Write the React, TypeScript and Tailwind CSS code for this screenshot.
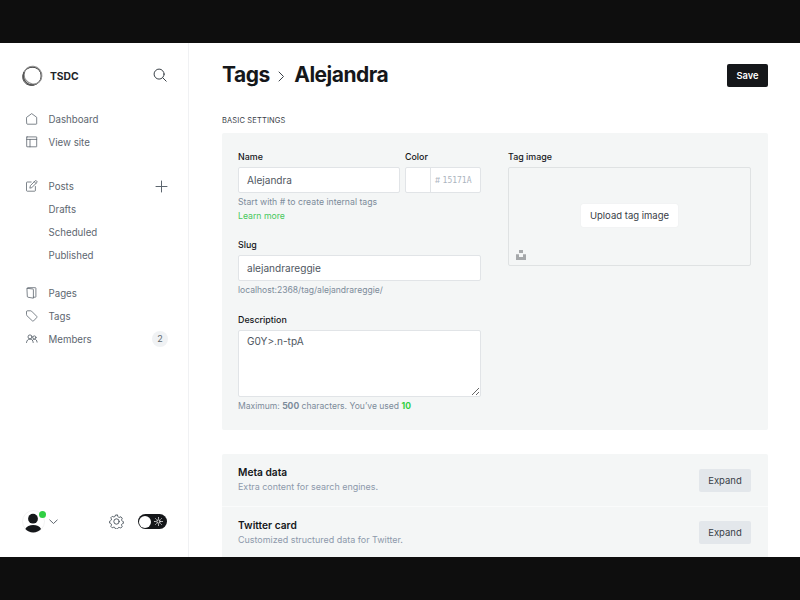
import type { ReactNode } from "react";

const line = {
  fill: "none",
  stroke: "currentColor",
  strokeLinecap: "round" as const,
  strokeLinejoin: "round" as const,
};

function Logo() {
  return (
    <svg width="22" height="22" viewBox="0 0 22 22" fill="none" stroke="#444" className="mt-px shrink-0">
      <circle cx="11.300" cy="11" r="9" strokeWidth="1" />
      <ellipse cx="11" cy="11.300" rx="9.600" ry="9" strokeWidth="0.8" transform="rotate(-35 11 11.3)" />
      <ellipse cx="12" cy="10.200" rx="9.200" ry="8.600" strokeWidth="1.100" stroke="#909090" transform="rotate(50 12 10.2)" />
      <path d="M3.300 7A9 9 0 0 0 13 19.700" strokeWidth="1.100" stroke="#555" />
    </svg>
  );
}

function SearchIcon() {
  return (
    <svg width="14" height="14" viewBox="0 0 14 14" {...line} strokeWidth="1" className="text-[#394047]">
      <circle cx="6.1" cy="6.1" r="5" />
      <path d="M9.8 9.8l3.4 3.4" />
    </svg>
  );
}

function HomeIcon() {
  return (
    <svg width="12" height="12" viewBox="0 0 12 12" {...line} strokeWidth="0.8">
      <path d="M.7 4.300L5.700.6l5 3.700V10.600a.6.6 0 0 1-.6.6H1.300a.6.6 0 0 1-.6-.6z" />
    </svg>
  );
}

function LayoutIcon() {
  return (
    <svg width="12" height="12" viewBox="0 0 12 12" {...line} strokeWidth="0.8">
      <rect x="0.700" y="0.900" width="10" height="9.900" rx=".3" />
      <path d="M.7 3.400h10M4 3.400v7.400" />
    </svg>
  );
}

function EditIcon() {
  return (
    <svg width="12" height="12" viewBox="0 0 12 12" {...line} strokeWidth="0.8">
      <path d="M5.200 2H1.200a.7.700 0 0 0-.7.700v7.800c0 .4.300.7.700.7h7.500c.4 0 .7-.3.700-.7V6.500" />
      <path d="M3.900 7.800l.5-2.200L9.100.9c.4-.4 1-.4 1.400 0l.3.300c.4.400.4 1 0 1.400L6.100 7.300zM8.300 1.800l1.600 1.600" />
    </svg>
  );
}

function PagesIcon() {
  return (
    <svg width="12" height="12" viewBox="0 0 12 12" {...line} strokeWidth="0.8">
      <path d="M1.300 1.300l5.600.700c.3 0 .5.300.5.600v8.600L1.900 10.200a.6.6 0 0 1-.6-.6z" />
      <path d="M1.300 1.300c0-.4.200-.6.600-.6h7.500c.3 0 .5.200.5.500v8.500c0 .3-.2.500-.5.500h-2" />
    </svg>
  );
}

function TagIcon() {
  return (
    <svg width="12" height="12" viewBox="0 0 12 12" {...line} strokeWidth="0.8">
      <path d="M.5 1.500c0-.4.300-.7.700-.7h3.600c.3 0 .5.100.7.300l5.200 5.200c.4.400.4.900 0 1.300L7.600 10.900c-.4.300-.9.300-1.200 0L.8 5.600a1 1 0 0 1-.3-.7z" />
    </svg>
  );
}

function MembersIcon() {
  return (
    <svg width="12" height="12" viewBox="0 0 12 12" {...line} strokeWidth="0.9">
      <circle cx="4" cy="3.900" r="2" />
      <path d="M.5 9.500C.7 7.300 2.100 6.100 4 6.100S7 7.300 7.200 9.500" />
      <circle cx="8.400" cy="4.500" r="1.600" />
      <path d="M6.900 6.800c.4-.4.900-.6 1.500-.6 1.600 0 2.500 1.100 2.700 2.900" />
    </svg>
  );
}

function GearIcon() {
  return (
    <svg width="15" height="15" viewBox="0 0 24 24" {...line} strokeWidth="1.500" className="text-[#4c555e]">
      <circle cx="12" cy="12" r="4.300" />
      <path d="M13.700 2.200l.6 1.800a2.200 2.200 0 0 0 3 1.200l1.700-.8 2.200 2.400-.8 1.700a2.200 2.200 0 0 0 1.200 3l1.300.6v3l-1.400.4a2.200 2.200 0 0 0-1.200 3l.8 1.700-2.300 2.300-1.700-.8a2.200 2.200 0 0 0-3 1.200l-.5 1.100h-3.200L9.800 22.500a2.200 2.200 0 0 0-3-1.200l-1.600.8-2.300-2.300.8-1.700a2.200 2.200 0 0 0-1.200-3L1 14.500v-3l1.500-.8a2.200 2.200 0 0 0 1.200-3L2.900 6l2.300-2.300 1.600.8a2.200 2.200 0 0 0 3-1.200l.6-1.700h2.800z" />
    </svg>
  );
}

function SunIcon() {
  return (
    <svg width="9" height="9" viewBox="0 0 9 9" {...line} strokeWidth="0.9" className="text-white">
      <circle cx="4.500" cy="4.500" r="1.700" />
      <path d="M4.500.6v.7M4.500 7.700v.7M.6 4.500h.7M7.700 4.500h.7M1.700 1.700l.5.500M6.800 6.800l.5.500M7.300 1.700l-.5.500M2.200 6.800l-.5.500" />
    </svg>
  );
}

function NavRow({ icon, label, end }: { icon?: ReactNode; label: string; end?: ReactNode }) {
  return (
    <a className="flex h-[23px] items-center pl-[26px] pr-5 text-[#5d666f]">
      <span className="flex w-[22.5px] shrink-0 pt-px">{icon}</span>
      <span className="flex-1 pt-[2px] text-[9.700px] leading-none">{label}</span>
      {end}
    </a>
  );
}

function Sidebar() {
  return (
    <nav className="flex w-[189px] shrink-0 flex-col border-r border-[#f0f1f3]">
      <div className="flex h-16 items-center pl-[21px] pr-[21px]">
        <Logo />
        <span className="ml-[7px] flex-1 pt-[3px] text-[10.300px] font-bold leading-none text-[#222529]">TSDC</span>
        <SearchIcon />
      </div>
      <div>
        <NavRow icon={<HomeIcon />} label="Dashboard" />
        <NavRow icon={<LayoutIcon />} label="View site" />
      </div>
      <div className="mt-[21px]">
        <NavRow
          icon={<EditIcon />}
          label="Posts"
          end={
            <svg width="13" height="13" viewBox="0 0 13 13" {...line} strokeWidth="1" className="mt-px">
              <path d="M6.500 1v11M1 6.500h11" />
            </svg>
          }
        />
        <NavRow label="Drafts" />
        <NavRow label="Scheduled" />
        <NavRow label="Published" />
      </div>
      <div className="mt-[15px]">
        <NavRow icon={<PagesIcon />} label="Pages" />
        <NavRow icon={<TagIcon />} label="Tags" />
        <NavRow
          icon={<MembersIcon />}
          label="Members"
          end={
            <span className="flex size-4 items-center justify-center rounded-full bg-[#f0f2f4] text-[9px] leading-none text-[#5d666f]">
              2
            </span>
          }
        />
      </div>
      <div className="mt-auto flex h-[71px] items-center pl-[22px] pr-[21.500px]">
        <span className="relative flex">
          <svg width="23" height="23" viewBox="0 0 23 23">
            <circle cx="11.500" cy="11.500" r="11" fill="#fff" stroke="#ececec" strokeWidth="0.7" />
            <circle cx="11" cy="8.700" r="4.900" fill="#15171a" />
            <path d="M3.300 19.100c1.200-2.600 4.300-4 7.900-4s6.700 1.400 7.900 4A11.300 11.300 0 0 1 11.200 22.600 11.300 11.300 0 0 1 3.300 19.100z" fill="#15171a" />
          </svg>
          <span className="absolute top-[0.5px] left-[16.500px] size-[7px] rounded-full bg-[#30cf43]" />
        </span>
        <svg width="9" height="6" viewBox="0 0 9 6" {...line} strokeWidth="0.9" className="ml-[4px] text-[#4c555e]">
          <path d="M.8 1l3.700 3.500L8.200 1" />
        </svg>
        <span className="ml-auto">
          <GearIcon />
        </span>
        <span className="ml-[14px] flex h-[15.500px] w-[28.500px] items-center justify-between rounded-full bg-[#15171a] pl-px pr-[4px]">
          <span className="size-3 rounded-full bg-white" />
          <SunIcon />
        </span>
      </div>
    </nav>
  );
}

function Label({ children }: { children: ReactNode }) {
  return <div className="h-[17px] text-[8.900px] font-medium leading-[14px] text-[#15171a]">{children}</div>;
}

function Expandable({ title, text }: { title: string; text: string }) {
  return (
    <div className="flex h-[52.500px] shrink-0 justify-between border-b border-[#fafbfb] pl-4 pr-[17px]">
      <div className="pt-[11px]">
        <h4 className="text-[10.200px] font-semibold leading-[15px] text-[#15171a]">{title}</h4>
        <p className="text-[8.950px] leading-[14px] text-[#8d99ab]">{text}</p>
      </div>
      <button className="mt-[14.500px] h-[23px] w-[52px] rounded-[2px] bg-[#e3e7eb] pt-px text-[9.500px] leading-none text-[#394047]">
        Expand
      </button>
    </div>
  );
}

function Settings() {
  return (
    <main className="flex flex-1 flex-col overflow-hidden pl-[33px] pr-8">
      <header className="flex h-[65px] shrink-0 items-center justify-between">
        <h2 className="-mt-[2px] flex items-center text-[21px] font-bold leading-none tracking-[-0.5px] text-[#15171a]">
          <span>Tags</span>
          <svg width="7" height="11" viewBox="0 0 7 11" {...line} strokeWidth="1" className="ml-[8.500px] mr-[9px] mt-1 text-[#394047]">
            <path d="M1 1l4.500 4.500L1 10" />
          </svg>
          <span>Alejandra</span>
        </h2>
        <button className="h-[23px] w-[41px] rounded-[2px] bg-[#15171a] text-[9.300px] font-semibold leading-none text-white">
          Save
        </button>
      </header>
      <h4 className="mt-[7px] h-[18px] shrink-0 text-[7.500px] leading-[12px] tracking-[0.14px] text-[#394047]">
        BASIC SETTINGS
      </h4>
      <section className="flex h-[297px] shrink-0 justify-between rounded-[2px] bg-[#f4f6f6] pl-4 pr-[17px] pt-[17px]">
        <div className="w-[243px]">
          <div className="flex gap-[5px]">
            <div className="w-[162px]">
              <Label>Name</Label>
              <div className="flex h-[26px] items-center rounded-[2px] border border-[#e1e4e7] bg-white pl-2 text-[10.100px] leading-none text-[#50575f]">
                Alejandra
              </div>
            </div>
            <div className="w-[76px]">
              <Label>Color</Label>
              <div className="flex h-[26px] rounded-[2px] border border-[#e1e4e7] bg-white text-[8px] leading-[25px] text-[#abb4be]">
                <span className="w-[25px] border-r border-[#e1e4e7]" />
                <span className="ml-1 font-['Inter']">#</span>
                <span className="ml-[2.500px] font-['DejaVu_Sans_Mono',monospace]">15171A</span>
              </div>
            </div>
          </div>
          <p className="mt-[3px] text-[8.700px] leading-[13.500px] text-[#7c8b9a]">
            Start with # to create internal tags
            <br />
            <a className="text-[#48c85c]">Learn more</a>
          </p>
          <div className="mt-[15px]">
            <Label>Slug</Label>
            <div className="flex h-[26px] items-center rounded-[2px] border border-[#e1e4e7] bg-white pl-2 text-[10.100px] leading-none text-[#50575f]">
              alejandrareggie
            </div>
            <p className="mt-[3px] text-[8.550px] leading-[13px] text-[#7c8b9a]">
              localhost:2368/tag/alejandrareggie/
            </p>
          </div>
          <div className="mt-4">
            <Label>Description</Label>
            <textarea
              className="block h-[67px] w-full rounded-[2px] border border-[#e1e4e7] bg-white px-2 py-[3px] text-[10.100px] leading-[15px] text-[#50575f]"
              defaultValue="G0Y>.n-tpA"
            />
            <p className="mt-[3px] text-[8.550px] leading-[13px] text-[#7c8b9a]">
              Maximum: <b>500</b> characters. You’ve used <b className="text-[#30cf43]">10</b>
            </p>
          </div>
        </div>
        <div className="w-[243px]">
          <Label>Tag image</Label>
          <div className="relative flex h-[99px] items-center justify-center rounded-[2px] border border-[#dfe2e3]">
            <button className="-mt-[3px] h-[23px] w-[97px] rounded-[2px] bg-white pt-px text-[9.500px] leading-none text-[#394047] shadow-[0_0_1px_#dfe2e3]">
              Upload tag image
            </button>
            <svg width="10" height="10" viewBox="0 0 10 10" fill="#a5a8aa" className="absolute bottom-[5px] left-[7px]">
              <path d="M3 0h4v3H3zM0 4.300h3v2.800h4V4.300h3V10H0z" />
            </svg>
          </div>
        </div>
      </section>
      <section className="mt-6 flex shrink-0 flex-col rounded-t-[2px] bg-[#f4f6f6]">
        <Expandable title="Meta data" text="Extra content for search engines." />
        <Expandable title="Twitter card" text="Customized structured data for Twitter." />
      </section>
    </main>
  );
}

export default function App() {
  return (
    <div className="flex h-[600px] w-[800px] flex-col overflow-hidden bg-[#0e0e0e] font-['Inter',sans-serif]">
      <div className="mt-[43px] flex h-[514px] bg-white">
        <Sidebar />
        <Settings />
      </div>
    </div>
  );
}
